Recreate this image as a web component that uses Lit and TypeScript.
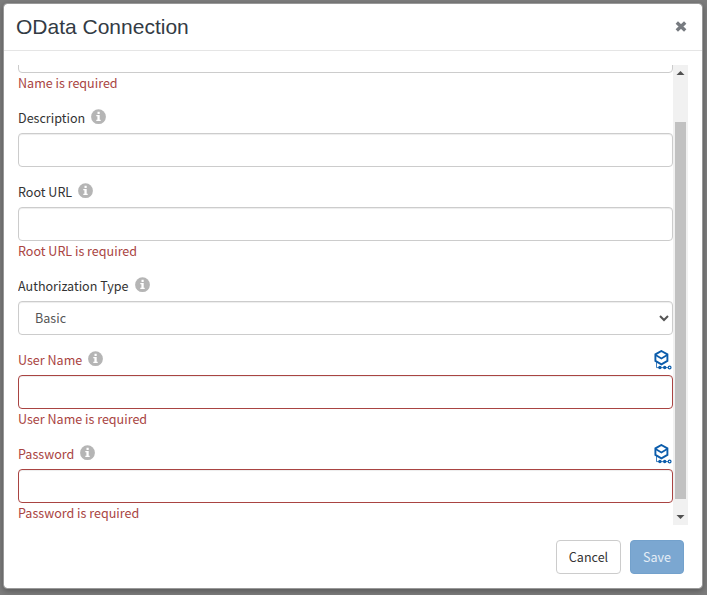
import { LitElement, html, css, svg, nothing } from "lit";
import { customElement, property } from "lit/decorators.js";

const infoIcon = svg`<svg class="info" width="16" height="16" viewBox="0 0 16 16">
  <circle cx="7.5" cy="7.7" r="7.4" fill="#b5b5b5"/>
  <path d="M6.5 2.8h2.2v2.1H6.5zM5.3 5.9h3.4v4.8h1V12H5.3v-1.3h1.1V7.2H5.3z" fill="#fff"/>
</svg>`;

const cubeIcon = svg`<svg class="cube" width="19" height="21" viewBox="0 0 19 21" fill="none" stroke="#0b5cab">
  <path d="M7.4 1l6 3.4v6.5l-6 3.4-6-3.4V4.4z" stroke-width="1.9"/>
  <path d="M1.6 4.9l5.8 3.5 5.8-3.5" stroke-width="1.7"/>
  <path d="M2.5 11v6.6h11.8" stroke-width=".8"/>
  <circle cx="5.9" cy="17.5" r="1.7" fill="#0b5cab" stroke="none"/>
  <circle cx="10.7" cy="17.5" r="1.7" fill="#0b5cab" stroke="none"/>
  <circle cx="15.6" cy="17.5" r="1.4" fill="#fff" stroke-width="1.2"/>
</svg>`;

@customElement("form-field")
export class FormField extends LitElement {
  @property() label = "";
  @property() error = "";
  @property({ type: Boolean }) invalid = false;
  @property({ type: Boolean }) bindable = false;
  @property() choice = "";

  static styles = css`
    :host { display: block; flex: none; color: #333; }
    * { box-sizing: border-box; }
    .row { display: flex; height: 25px; line-height: 20px; }
    .info { margin: 1px 0 0 6px; flex: none; }
    .cube { margin-left: auto; flex: none; }
    .control {
      display: block; width: 100%; height: 34px; margin: 0; padding: 6px 12px;
      border: 1px solid #ccc; border-radius: 4px; background: #fff; color: #555;
      font: inherit; outline: none; box-shadow: inset 0 1px 1px rgba(0, 0, 0, .075);
    }
    select.control { padding: 5px 12px 7px; }
    .bad .row, .error { color: #a94442; }
    .bad .control { border-color: #a94442; }
    .error { height: 20px; line-height: 20px; }
  `;

  render() {
    return html`<div class=${this.invalid ? "bad" : ""}>
      ${this.label
        ? html`<div class="row"><span>${this.label}</span>${infoIcon}${this.bindable ? cubeIcon : nothing}</div>`
        : nothing}
      ${this.choice
        ? html`<select class="control"><option>${this.choice}</option></select>`
        : html`<input class="control" />`}
      ${this.error ? html`<div class="error">${this.error}</div>` : nothing}
    </div>`;
  }
}

@customElement("app-root")
export class AppRoot extends LitElement {
  static styles = css`
    :host {
      display: block; height: 595px; box-sizing: border-box; padding: 3px 4px 6px 3px;
      background: #7d7d7d; font: 12.55px/20px "Noto Sans CJK SC", sans-serif; color: #333;
    }
    * { box-sizing: border-box; }
    .dialog {
      height: 586px; display: flex; flex-direction: column; background: #fff;
      border: 1px solid #999; border-radius: 4px; background-clip: padding-box;
      box-shadow: 0 2px 6px rgba(0, 0, 0, .3);
    }
    .header {
      height: 47px; display: flex; align-items: center; justify-content: space-between;
      padding: 0 15px 0 12px; border-bottom: 1px solid #e5e5e5;
    }
    .title { margin: 0; font: 21px/30px "Liberation Sans", sans-serif; color: #333b44; }
    .body { display: flex; height: 460px; margin: 14px 14px 0; }
    .fields {
      flex: 1; display: flex; flex-direction: column; justify-content: flex-end;
      gap: 15px; overflow: hidden; padding-bottom: 2px;
    }
    .scrollbar {
      width: 15px; display: flex; flex-direction: column; align-items: center;
      background: #f1f1f1;
    }
    .scrollbar svg { flex: none; }
    .thumb { width: 11px; height: 377px; margin: 42px 0 auto; background: #c1c1c1; }
    .footer { display: flex; justify-content: flex-end; gap: 9px; padding: 15px 18px 0 0; }
    button {
      height: 34px; padding: 0; border-radius: 4px; border: 1px solid #ccc;
      background: #fff; color: #333; font: inherit;
    }
    .cancel { width: 65px; }
    .save { width: 54px; background: #7ba7d1; border-color: #73a1cc; color: #e4edf6; }
  `;

  render() {
    return html`<div class="dialog">
      <div class="header">
        <h1 class="title">OData Connection</h1>
        <svg width="12" height="12" viewBox="0 0 12 12" stroke="#777b80" stroke-width="3.4">
          <path d="M1.8 1.6l8.4 8M10.2 1.6l-8.4 8"/>
        </svg>
      </div>
      <div class="body">
        <div class="fields">
          <form-field error="Name is required"></form-field>
          <form-field label="Description"></form-field>
          <form-field label="Root URL" error="Root URL is required"></form-field>
          <form-field label="Authorization Type" choice="Basic"></form-field>
          <form-field label="User Name" error="User Name is required" invalid bindable></form-field>
          <form-field label="Password" error="Password is required" invalid bindable></form-field>
        </div>
        <div class="scrollbar">
          <svg width="15" height="15"><path d="M3.5 10l4-4 4 4z" fill="#505050"/></svg>
          <div class="thumb"></div>
          <svg width="15" height="15"><path d="M3.5 5l4 4 4-4z" fill="#505050"/></svg>
        </div>
      </div>
      <div class="footer">
        <button class="cancel">Cancel</button>
        <button class="save">Save</button>
      </div>
    </div>`;
  }
}
